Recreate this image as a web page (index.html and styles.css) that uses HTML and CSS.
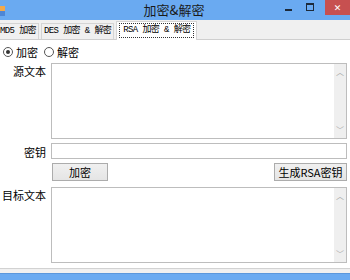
FILE: index.html
```html
<!DOCTYPE html>
<html lang="zh-CN">
<head>
  <meta charset="UTF-8">
  <title>加密&amp;解密</title>
  <link rel="stylesheet" href="styles.css">
</head>
<body>
  <div class="window">
    <div class="titlebar">
      <div class="app-icon"></div>
      <div class="title">加密&amp;解密</div>
      <div class="controls">
        <span class="ctl ctl-min"><i></i></span>
        <span class="ctl ctl-max"><i></i></span>
        <span class="ctl ctl-close">✕</span>
      </div>
    </div>

    <div class="tabs">
      <div class="tab tab-first">MD5 加密</div>
      <div class="tab">DES 加密 &amp; 解密</div>
      <div class="tab active"><span class="focus">RSA 加密 &amp; 解密</span></div>
    </div>

    <div class="page">
      <div class="mode">
        <label class="radio"><span class="dot checked"></span>加密</label>
        <label class="radio"><span class="dot"></span>解密</label>
      </div>

      <div class="row">
        <span class="label">源文本</span>
        <div class="area"><div class="scroll"><span>︿</span><span>﹀</span></div></div>
      </div>

      <div class="row row-key">
        <span class="label">密钥</span>
        <div class="input"></div>
      </div>

      <div class="row row-buttons">
        <span class="label"></span>
        <button class="btn btn-enc">加密</button>
        <button class="btn btn-gen">生成RSA密钥</button>
      </div>

      <div class="row">
        <span class="label">目标文本</span>
        <div class="area"><div class="scroll"><span>︿</span><span>﹀</span></div></div>
      </div>
    </div>

    <div class="statusbar"></div>
    <div class="taskbar"></div>
  </div>
</body>
</html>
```

FILE: styles.css
```css
body {
  margin: 0;
  font-family: "Noto Sans CJK SC", "DejaVu Sans", sans-serif;
  font-size: 11px;
  color: #000;
  background: #fff;
}

.window {
  width: 350px;
  height: 280px;
  display: flex;
  flex-direction: column;
  overflow: hidden;
}

/* title bar */
.titlebar {
  height: 22px;
  background-color: #6aaaf1;
  display: flex;
  align-items: flex-start;
}

.app-icon {
  width: 5px;
  height: 10px;
  margin-top: 6px;
  background: linear-gradient(#f3a94b 0 50%, #4d86d6 50%);
}

.title {
  flex: 1;
  text-align: center;
  font-size: 13px;
  line-height: 20px;
  color: #1a1a1a;
  padding-left: 66px;
}

.controls {
  display: flex;
  height: 15px;
}

.ctl {
  width: 22px;
  height: 15px;
  display: flex;
  justify-content: center;
  align-items: center;
}

.ctl-min i {
  width: 7px;
  height: 2px;
  background: #1d2a3a;
  margin-top: 4px;
}

.ctl-max {
  margin-right: 4px;
}

.ctl-max i {
  width: 6px;
  height: 5px;
  border: 1px solid #1d2a3a;
  border-top-width: 2px;
  margin-top: -2px;
}

.ctl-close {
  width: 25px;
  background-color: #c75050;
  color: #fff;
  font-size: 9px;
  font-weight: bold;
}

/* tab strip */
.tabs {
  height: 18px;
  background-color: #f0f0f0;
  border-bottom: 1px solid #cfcfcf;
  display: flex;
  align-items: flex-end;
  padding-top: 1px;
}

.tab {
  height: 15px;
  padding: 0 2px;
  margin-right: 2px;
  border: 1px solid #d4d4d4;
  border-bottom: none;
  background-color: #f0f0f0;
  font-family: "Liberation Mono", "Noto Sans CJK SC", monospace;
  font-size: 9px;
  letter-spacing: -0.6px;
  line-height: 15px;
  white-space: nowrap;
}

.tab-first {
  margin-left: -3px;
}

.tab.active {
  height: 17px;
  background-color: #fff;
  margin-bottom: -1px;
  padding: 1px 2px 0;
}

.focus {
  display: block;
  height: 13px;
  line-height: 13px;
  padding: 0 3px;
  border: 1px dotted #333;
}

/* content */
.page {
  flex: 1;
  padding: 4px 3px 0 2px;
  display: flex;
  flex-direction: column;
}

.mode {
  display: flex;
  gap: 6px;
  height: 16px;
  align-items: center;
  margin-left: 1px;
  margin-bottom: 3px;
}

.radio {
  display: flex;
  align-items: center;
  gap: 3px;
}

.dot {
  width: 10px;
  height: 10px;
  border: 1px solid #555;
  border-radius: 50%;
  background: #fff;
  box-sizing: border-box;
  position: relative;
}

.dot.checked::after {
  content: "";
  position: absolute;
  left: 2px;
  top: 2px;
  width: 4px;
  height: 4px;
  border-radius: 50%;
  background: #333;
}

.row {
  display: flex;
  gap: 5px;
  margin-bottom: 4px;
}

.label {
  width: 44px;
  text-align: right;
  flex-shrink: 0;
  line-height: 14px;
  padding-top: 1px;
  white-space: nowrap;
}

.area {
  flex: 1;
  height: 74px;
  border: 1px solid #bdbdbd;
  background: #fff;
  display: flex;
  justify-content: flex-end;
}

.scroll {
  width: 12px;
  background-color: #efefef;
  display: flex;
  flex-direction: column;
  justify-content: space-between;
  align-items: center;
  color: #a8a8a8;
  font-size: 8px;
  line-height: 12px;
  padding: 2px 0;
}

.row-key {
  align-items: center;
}

.input {
  flex: 1;
  height: 14px;
  border: 1px solid #bdbdbd;
}

.row-buttons {
  justify-content: space-between;
  margin-bottom: 6px;
}

.btn {
  height: 18px;
  padding: 0;
  border: 1px solid #acacac;
  background: linear-gradient(#f0f0f0, #e5e5e5);
  font-family: "Noto Sans CJK SC", sans-serif;
  font-size: 11px;
  line-height: 15px;
  color: #000;
}

.btn-enc {
  width: 56px;
  margin-left: 1px;
}

.btn-gen {
  width: 73px;
  margin-left: auto;
}

.statusbar {
  height: 4px;
  margin-top: 1px;
  background-color: #f0f0f0;
  border-top: 1px solid #d2d2d2;
}

.taskbar {
  height: 7px;
  background-color: #6aaaf1;
  border-top: 1px solid #5b97dc;
}
```
